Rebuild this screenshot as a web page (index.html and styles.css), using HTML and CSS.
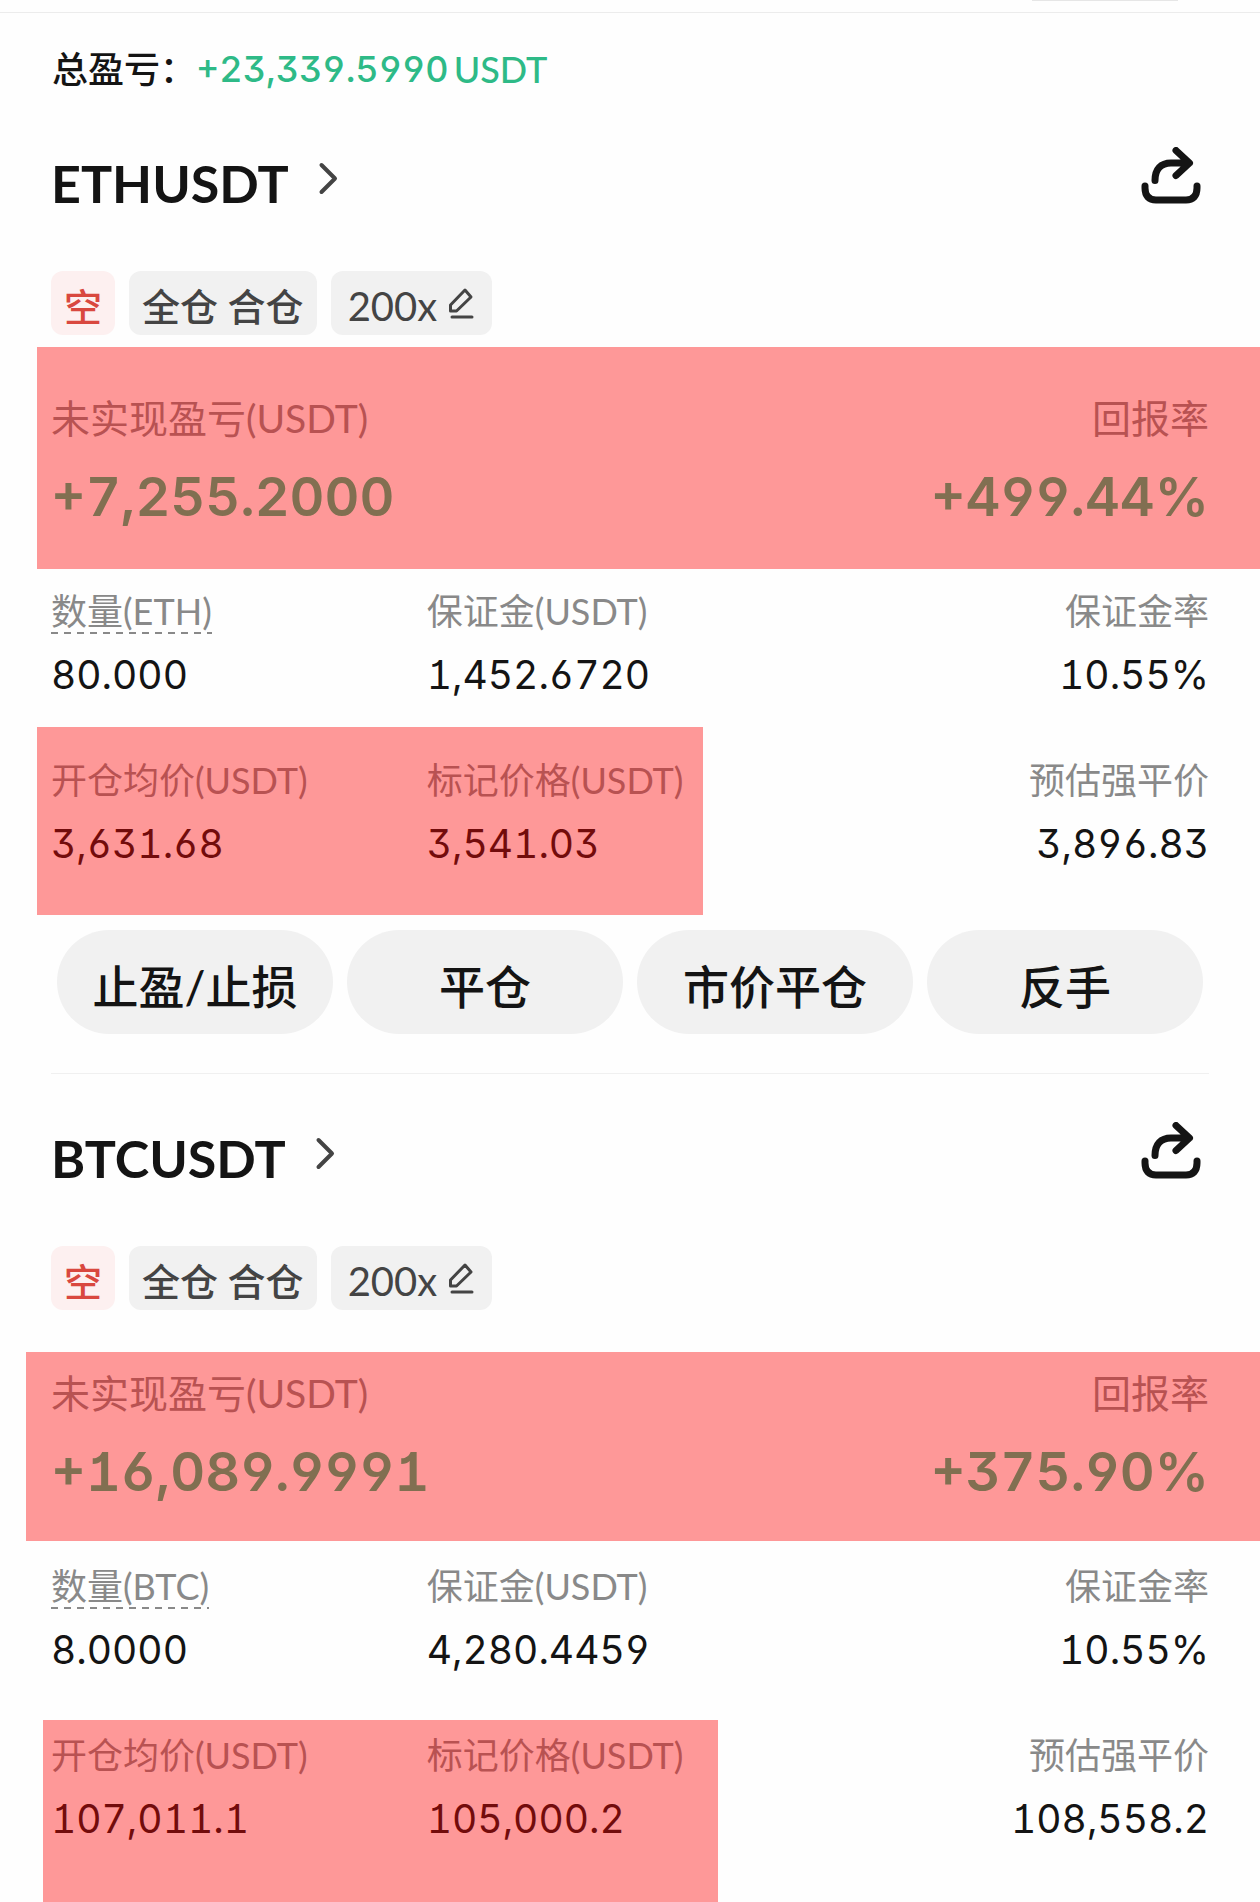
FILE: index.html
```html
<!DOCTYPE html>
<html lang="zh-CN">
<head>
    <meta charset="UTF-8">
    <meta name="viewport" content="width=device-width, initial-scale=1.0">
    <title>总盈亏</title>
    <link rel="stylesheet" href="styles.css">
</head>
<body>
    <div class="topbar"><div class="topbar-tab"></div></div>
    <div class="summary">
        <span>总盈亏：</span>
        <span class="summary-value">+23,339.5990</span>
        <span class="summary-unit">USDT</span>
    </div>

    <section class="position">
        <div class="position-header">
            <a class="symbol" href="#">
                <h2>ETHUSDT</h2>
                <svg class="chevron" viewBox="0 0 20 34"><path d="M3.5 4L17 17.5 3.5 31"/></svg>
            </a>
            <button class="share-btn" aria-label="分享">
                <svg viewBox="0 0 60 62"><path d="M4 39v2c0 8 4 12 11 12h30c7 0 11-4 11-12v-2M14 33.5C14 22 20 16 30 16h18M35 3.5L48.500 16 35 28.500"/></svg>
            </button>
        </div>
        <div class="tags">
            <span class="tag tag-short"><span>空</span></span>
            <span class="tag tag-mode"><span>全仓 合仓</span></span>
            <button class="tag tag-leverage">
                <span>200x</span>
                <svg viewBox="0 0 28 32"><path d="M3.500 24v-6L18 3l6 7L9.500 24zM5 30h20"/></svg>
            </button>
        </div>
        <div class="pnl">
            <div>
                <div class="pnl-label">未实现盈亏(USDT)</div>
                <div class="pnl-value">+7,255.2000</div>
            </div>
            <div class="right">
                <div class="pnl-label">回报率</div>
                <div class="pnl-value">+499.44%</div>
            </div>
            <div class="mark mark-eth-pnl"></div>
        </div>
        <div class="stats">
            <div>
                <div class="stat-label"><span class="hint">数量(ETH)</span></div>
                <div class="stat-value">80.000</div>
            </div>
            <div>
                <div class="stat-label">保证金(USDT)</div>
                <div class="stat-value">1,452.6720</div>
            </div>
            <div class="right">
                <div class="stat-label">保证金率</div>
                <div class="stat-value">10.55%</div>
            </div>
        </div>
        <div class="stats">
            <div>
                <div class="stat-label">开仓均价(USDT)</div>
                <div class="stat-value">3,631.68</div>
            </div>
            <div>
                <div class="stat-label">标记价格(USDT)</div>
                <div class="stat-value">3,541.03</div>
            </div>
            <div class="right">
                <div class="stat-label">预估强平价</div>
                <div class="stat-value">3,896.83</div>
            </div>
            <div class="mark mark-eth-price"></div>
        </div>
        <div class="actions">
            <button class="action-btn">止盈/止损</button>
            <button class="action-btn">平仓</button>
            <button class="action-btn">市价平仓</button>
            <button class="action-btn">反手</button>
        </div>
    </section>

    <section class="position">
        <div class="position-header">
            <a class="symbol" href="#">
                <h2>BTCUSDT</h2>
                <svg class="chevron" viewBox="0 0 20 34"><path d="M3.5 4L17 17.5 3.5 31"/></svg>
            </a>
            <button class="share-btn" aria-label="分享">
                <svg viewBox="0 0 60 62"><path d="M4 39v2c0 8 4 12 11 12h30c7 0 11-4 11-12v-2M14 33.5C14 22 20 16 30 16h18M35 3.5L48.500 16 35 28.500"/></svg>
            </button>
        </div>
        <div class="tags">
            <span class="tag tag-short"><span>空</span></span>
            <span class="tag tag-mode"><span>全仓 合仓</span></span>
            <button class="tag tag-leverage">
                <span>200x</span>
                <svg viewBox="0 0 28 32"><path d="M3.500 24v-6L18 3l6 7L9.500 24zM5 30h20"/></svg>
            </button>
        </div>
        <div class="pnl">
            <div>
                <div class="pnl-label">未实现盈亏(USDT)</div>
                <div class="pnl-value">+16,089.9991</div>
            </div>
            <div class="right">
                <div class="pnl-label">回报率</div>
                <div class="pnl-value">+375.90%</div>
            </div>
            <div class="mark mark-btc-pnl"></div>
        </div>
        <div class="stats">
            <div>
                <div class="stat-label"><span class="hint">数量(BTC)</span></div>
                <div class="stat-value">8.0000</div>
            </div>
            <div>
                <div class="stat-label">保证金(USDT)</div>
                <div class="stat-value">4,280.4459</div>
            </div>
            <div class="right">
                <div class="stat-label">保证金率</div>
                <div class="stat-value">10.55%</div>
            </div>
        </div>
        <div class="stats">
            <div>
                <div class="stat-label">开仓均价(USDT)</div>
                <div class="stat-value">107,011.1</div>
            </div>
            <div>
                <div class="stat-label">标记价格(USDT)</div>
                <div class="stat-value">105,000.2</div>
            </div>
            <div class="right">
                <div class="stat-label">预估强平价</div>
                <div class="stat-value">108,558.2</div>
            </div>
            <div class="mark mark-btc-price"></div>
        </div>
    </section>
</body>
</html>
```
FILE: styles.css
```css
* { margin: 0; padding: 0; box-sizing: border-box; }
body { font-family: Lato, 'Noto Sans CJK SC', sans-serif; background: #fefefe; color: #141414; }
button { font-family: inherit; border: none; background: none; cursor: pointer; }
a { color: inherit; text-decoration: none; }
svg { display: block; fill: none; stroke: currentColor; stroke-linecap: round; stroke-linejoin: round; }

.topbar { display: flex; justify-content: flex-end; height: 13px; padding-right: 82px; border-bottom: 1px solid #ececec; }
.topbar-tab { width: 146px; height: 1px; background: #e6e6e6; }

.summary { display: flex; padding: 36px 52px 10px; font-size: 36px; line-height: 40px; font-weight: 500; }
.summary-value, .pnl-value, .stat-value { font-family: Inter, sans-serif; font-variant-numeric: tabular-nums; font-feature-settings: 'cv01', 'cv03', 'cv04', 'cv09'; }
.summary-value, .summary-unit { color: #2eba87; }
.summary-unit { margin-left: 5px; }

.position { padding: 40px 51px 0; }
.position-header { display: flex; justify-content: space-between; align-items: center; padding-right: 8px; }
.symbol { display: flex; align-items: center; gap: 29px; }
.symbol h2 { padding: 12px 0 2px; font-size: 52px; line-height: 64px; font-weight: 700; }
.chevron { width: 20px; height: 34px; color: #444; stroke-width: 4; }
.share-btn svg { width: 60px; height: 62px; color: #141414; stroke-width: 7; }

.tags { display: flex; gap: 14px; margin-top: 54px; }
.tag { display: flex; align-items: center; gap: 10px; height: 64px; padding: 0 13px; border-radius: 12px; background: #f1f1f1; color: #444; font-size: 38px; line-height: 56px; font-weight: 500; }
.tag span { padding-top: 6px; }
.tag-short { background: #fdf0f0; color: #d9483f; }
.tag-leverage { padding: 0 17px; font-size: 40px; font-weight: 400; }
.tag svg { width: 28px; height: 32px; stroke-width: 3; }

.right { text-align: right; }
.pnl { position: relative; display: flex; justify-content: space-between; margin-top: 59px; }
.pnl-label { color: #898989; font-size: 39px; line-height: 48px; }
.pnl-value { margin-top: 25px; color: #2eba87; font-size: 54px; line-height: 60px; font-weight: 600; }

.stats { position: relative; display: grid; grid-template-columns: 49fr 51fr 51fr; margin-top: 61px; }
.pnl + .stats { margin-top: 63px; }
.stat-label { height: 44px; color: #898989; font-size: 36px; line-height: 42px; }
.stat-value { margin-top: 17px; font-size: 39px; line-height: 48px; }
.hint { display: inline-block; height: 44px; background: repeating-linear-gradient(90deg, #898989 0 7px, transparent 7px 13px) left bottom / 100% 2px no-repeat; }
.stats + .stats { margin-top: 60px; }

.actions { display: flex; gap: 14px; margin-top: 62px; padding: 0 6px 39px; }
.action-btn { flex: 1; height: 104px; padding-top: 10px; border-radius: 52px; background: #f1f1f1; color: #141414; font-size: 46px; line-height: 60px; font-weight: 500; }
.position + .position { padding-top: 0; padding-bottom: 59px; }
.position + .position::before { content: ''; display: block; margin-bottom: 40px; border-top: 1px solid #f0f0f0; }

/* translucent marker blocks over the figures */
.mark { position: absolute; background: rgba(255, 0, 0, 0.4); pointer-events: none; }
.mark-eth-pnl { top: -47px; right: -51px; bottom: -42px; left: -14px; }
.mark-eth-price { top: -32px; right: 506px; bottom: -47px; left: -14px; }
.mark-btc-pnl { top: -17px; right: -51px; bottom: -39px; left: -25px; }
.mark-btc-price { top: -14px; right: 491px; bottom: -59px; left: -8px; }
```
